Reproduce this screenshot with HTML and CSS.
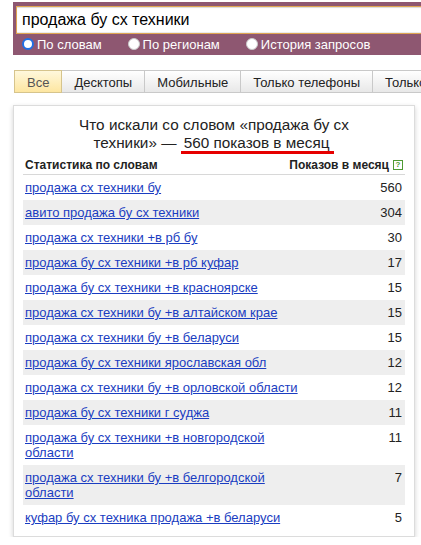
FILE: index.html
```html
<!DOCTYPE html>
<html lang="ru">
<head>
<meta charset="utf-8">
<title>Wordstat</title>
<link rel="stylesheet" href="styles.css">
</head>
<body>
<div class="page">
  <div class="header">
    <div class="search-box">продажа бу сх техники</div>
    <div class="modes">
      <label class="mode"><span class="radio radio-on"></span>По словам</label>
      <label class="mode"><span class="radio"></span>По регионам</label>
      <label class="mode"><span class="radio"></span>История запросов</label>
    </div>
  </div>

  <div class="tabs">
    <span class="tab tab-active">Все</span>
    <span class="tab">Десктопы</span>
    <span class="tab">Мобильные</span>
    <span class="tab">Только телефоны</span>
    <span class="tab">Только планшеты</span>
  </div>

  <div class="card">
    <div class="title">Что искали со словом «продажа бу сх техники» — <span class="title-mark">560 показов в месяц</span></div>
    <div class="thead">
      <span class="th-left">Статистика по словам</span>
      <span class="th-right">Показов в месяц<span class="help">?</span></span>
    </div>
    <div class="row"><a class="phrase" href="#">продажа сх техники бу</a><span class="count">560</span></div>
    <div class="row"><a class="phrase" href="#">авито продажа бу сх техники</a><span class="count">304</span></div>
    <div class="row"><a class="phrase" href="#">продажа сх техники +в рб бу</a><span class="count">30</span></div>
    <div class="row"><a class="phrase" href="#">продажа бу сх техники +в рб куфар</a><span class="count">17</span></div>
    <div class="row"><a class="phrase" href="#">продажа бу сх техники +в красноярске</a><span class="count">15</span></div>
    <div class="row"><a class="phrase" href="#">продажа сх техники бу +в алтайском крае</a><span class="count">15</span></div>
    <div class="row"><a class="phrase" href="#">продажа сх техники бу +в беларуси</a><span class="count">15</span></div>
    <div class="row"><a class="phrase" href="#">продажа бу сх техники ярославская обл</a><span class="count">12</span></div>
    <div class="row"><a class="phrase" href="#">продажа сх техники бу +в орловской области</a><span class="count">12</span></div>
    <div class="row"><a class="phrase" href="#">продажа бу сх техники г суджа</a><span class="count">11</span></div>
    <div class="row"><a class="phrase" href="#">продажа бу сх техники +в новгородской области</a><span class="count">11</span></div>
    <div class="row"><a class="phrase" href="#">продажа сх техники бу +в белгородской области</a><span class="count">7</span></div>
    <div class="row"><a class="phrase" href="#">куфар бу сх техника продажа +в беларуси</a><span class="count">5</span></div>
  </div>
</div>
</body>
</html>
```

FILE: styles.css
```css
html, body {
  margin: 0;
  padding: 0;
  background: #fff;
  overflow: hidden;
}

body {
  font-family: "Liberation Sans", Arial, sans-serif;
  font-size: 13px;
  color: #222;
}

.page {
  padding-top: 2px;
}

/* search header */
.header {
  margin-left: 13px;
  height: 53px;
  background: #8e5771;
  padding-top: 4px;
  box-sizing: border-box;
  overflow: hidden;
}

.search-box {
  margin-left: 3px;
  margin-right: -30px;
  height: 28px;
  box-sizing: border-box;
  border: 1px solid #dfa552;
  background: #fff;
  box-shadow: inset 0 1px 1px rgba(0, 0, 0, 0.15), inset 0 -1px 0 rgba(0, 0, 0, 0.08);
  padding-left: 5px;
  font-size: 16px;
  line-height: 25px;
  color: #000;
}

.modes {
  display: flex;
  align-items: center;
  height: 20px;
  padding-left: 9px;
  gap: 26px;
}

.mode {
  display: flex;
  align-items: center;
  gap: 3px;
  color: #fff;
  font-size: 13px;
  line-height: 15px;
}

.radio {
  width: 12px;
  height: 12px;
  box-sizing: border-box;
  border-radius: 50%;
  background: #fff;
  border: 1px solid #c9c9c9;
}

.radio-on {
  border: 2.5px solid #1f6fe5;
}

/* tabs */
.tabs {
  display: flex;
  margin: 15px 0 0 14px;
  white-space: nowrap;
  overflow: hidden;
}

.tab {
  flex: none;
  height: 23px;
  box-sizing: border-box;
  padding: 2px 12px 0;
  line-height: 19px;
  border: 1px solid #c9c9c9;
  border-left: none;
  background: linear-gradient(#ffffff, #e8e8e8);
  color: #222;
}

.tab:first-child {
  border-left: 1px solid #c9c9c9;
}

.tab-active {
  background: linear-gradient(#fff8dc, #fde6a1);
  border-color: #d6c48c;
  color: #555;
}

.tab-active:first-child {
  border-left-color: #d6c48c;
}

/* card */
.card {
  margin: 12px 0 0 13px;
  width: 402px;
  box-sizing: border-box;
  border: 1px solid #dcdcdc;
  box-shadow: 0 2px 5px rgba(0, 0, 0, 0.18);
  padding: 10px 9px 6px;
  background: #fff;
}

.title {
  width: 290px;
  margin: 0 auto;
  text-align: center;
  font-size: 15.3px;
  line-height: 18px;
  color: #222;
}

.title-mark {
  padding: 0 5px 0 3px;
  border-bottom: 3px solid #e60000;
}

.thead {
  display: flex;
  justify-content: space-between;
  align-items: center;
  margin-top: 6px;
  padding: 0 2px 2px;
  border-bottom: 1px solid #d8d8d8;
  font-size: 12px;
  font-weight: bold;
  line-height: 14px;
  color: #222;
}

.th-right {
  display: flex;
  align-items: center;
}

.help {
  display: inline-block;
  width: 10px;
  height: 10px;
  box-sizing: border-box;
  margin-left: 4px;
  border: 1px solid #4f9a33;
  color: #4f9a33;
  font-size: 8px;
  line-height: 8px;
  text-align: center;
  font-weight: bold;
}

.row {
  display: flex;
  justify-content: space-between;
  align-items: flex-start;
  padding: 5px 2px;
  line-height: 15px;
}

.row:nth-of-type(even) {
  background: #eeeeee;
}

.phrase {
  max-width: 280px;
  color: #1a3dc1;
  text-decoration: underline;
}

.count {
  color: #222;
  padding-right: 1px;
}
```
